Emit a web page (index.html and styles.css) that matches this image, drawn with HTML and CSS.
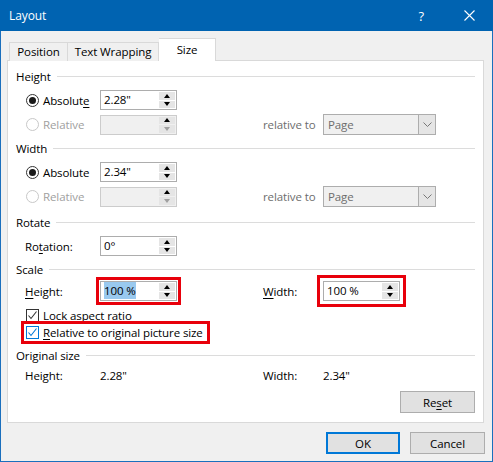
FILE: index.html
```html
<!DOCTYPE html>
<html lang="en">
<head>
  <meta charset="UTF-8">
  <title>Layout</title>
  <link rel="stylesheet" href="styles.css">
</head>
<body>
  <div class="dialog">
    <div class="titlebar">
      <span class="title">Layout</span>
      <span class="help">?</span>
      <span class="close">
        <svg width="11" height="11" viewBox="0 0 11 11"><path d="M0.5 0.5L10.5 10.5M10.5 0.5L0.5 10.5" stroke="#fff" stroke-width="1.1" fill="none"/></svg>
      </span>
    </div>

    <div class="tabs">
      <div class="tab tab-position">Position</div>
      <div class="tab tab-wrap">Text Wrapping</div>
      <div class="tab tab-size active">Size</div>
    </div>

    <div class="panel">
      <!-- Height -->
      <div class="group-title first"><span>Height</span></div>
      <div class="row">
        <label class="opt"><span class="radio on"></span><span>Absolut<u>e</u></span></label>
        <div class="spin"><span class="val">2.28"</span><span class="arrows"><i class="up"></i><i class="down"></i></span></div>
      </div>
      <div class="row tall">
        <label class="opt off"><span class="radio"></span><span>Relative</span></label>
        <div class="spin disabled"><span class="val"></span><span class="arrows"><i class="up"></i><i class="down"></i></span></div>
        <span class="rel-label">relative to</span>
        <div class="combo"><span class="combo-text">Page</span><span class="combo-btn"><svg width="9" height="5" viewBox="0 0 9 5"><path d="M0.5 0.5L4.5 4.5L8.5 0.5" stroke="#777" fill="none"/></svg></span></div>
      </div>

      <!-- Width -->
      <div class="group-title"><span>Width</span></div>
      <div class="row">
        <label class="opt"><span class="radio on"></span><span>Absolute</span></label>
        <div class="spin"><span class="val">2.34"</span><span class="arrows"><i class="up"></i><i class="down"></i></span></div>
      </div>
      <div class="row tall">
        <label class="opt off"><span class="radio"></span><span>Relative</span></label>
        <div class="spin disabled"><span class="val"></span><span class="arrows"><i class="up"></i><i class="down"></i></span></div>
        <span class="rel-label">relative to</span>
        <div class="combo"><span class="combo-text">Page</span><span class="combo-btn"><svg width="9" height="5" viewBox="0 0 9 5"><path d="M0.5 0.5L4.5 4.5L8.5 0.5" stroke="#777" fill="none"/></svg></span></div>
      </div>

      <!-- Rotate -->
      <div class="group-title rotate"><span>Rotate</span></div>
      <div class="row">
        <span class="label">Ro<u>t</u>ation:</span>
        <div class="spin"><span class="val">0°</span><span class="arrows"><i class="up"></i><i class="down"></i></span></div>
      </div>

      <!-- Scale -->
      <div class="group-title"><span>Scale</span></div>
      <div class="row scale-row">
        <span class="label"><span><u>H</u>eight:</span></span>
        <div class="spin marked-left"><span class="val"><span class="selected">100 %</span></span><span class="arrows"><i class="up"></i><i class="down"></i></span></div>
        <span class="rel-label dark"><u>W</u>idth:</span>
        <div class="spin marked-right"><span class="val">100 %</span><span class="arrows"><i class="up"></i><i class="down"></i></span></div>
      </div>
      <div class="row check-row">
        <label class="opt"><span class="check"><svg width="11" height="11" viewBox="0 0 11 11"><path d="M1.5 5.5L4 8.5L9.5 1.5" stroke="#333" stroke-width="1.1" fill="none"/></svg></span><span>Lock <u>a</u>spect ratio</span></label>
      </div>
      <div class="row check-row marked-row">
        <label class="opt marked-check"><span class="check blue"><svg width="11" height="11" viewBox="0 0 11 11"><path d="M1.5 5.5L4 8.5L9.5 1.5" stroke="#0078d7" stroke-width="1.1" fill="none"/></svg></span><span><u>R</u>elative to original picture size</span></label>
      </div>

      <!-- Original size -->
      <div class="group-title original"><span>Original size</span></div>
      <div class="row info-row">
        <span class="label">Height:</span>
        <span class="info-val">2.28"</span>
        <span class="rel-label dark">Width:</span>
        <span class="info-val">2.34"</span>
      </div>
      <div class="reset-row">
        <button class="btn">Re<u>s</u>et</button>
      </div>
    </div>

    <div class="footer">
      <button class="btn btn-ok">OK</button>
      <button class="btn btn-cancel">Cancel</button>
    </div>
  </div>
</body>
</html>
```

FILE: styles.css
```css
/* Dialog frame */
body {
  margin: 0;
  background-color: #f0f0f0;
  font-family: "Open Sans", "Noto Sans", sans-serif;
  font-size: 11.5px;
  letter-spacing: -0.1px;
  color: #000;
}

.dialog {
  width: 493px;
  height: 462px;
  box-sizing: border-box;
  border: 1px solid #1a6fbd;
  border-top: none;
  background-color: #f0f0f0;
  display: flex;
  flex-direction: column;
}

u {
  text-decoration-thickness: 1px;
  text-underline-offset: 2px;
}

/* Title bar */
.titlebar {
  height: 31px;
  margin: 0 -1px;
  background-color: #0063b1;
  color: #fff;
  display: flex;
  align-items: center;
  padding: 0 18px 0 9px;
}

.title {
  font-size: 12px;
  flex: 1;
  padding-bottom: 1px;
}

.help {
  font-size: 13px;
  margin-right: 40px;
}

.close {
  display: flex;
}

/* Tabs */
.tabs {
  display: flex;
  align-items: flex-end;
  margin: 7px 0 -1px 8px;
  position: relative;
  z-index: 1;
}

.tab {
  height: 18px;
  line-height: 18px;
  text-align: center;
  border: 1px solid #d9d9d9;
  border-bottom: none;
  background-color: #f0f0f0;
  box-sizing: content-box;
}

.tab-position {
  width: 57px;
}

.tab-wrap {
  width: 90px;
  border-left: none;
}

.tab-size {
  width: 56px;
}

.tab.active {
  height: 22px;
  line-height: 22px;
  background-color: #fff;
  border-left: none;
}

/* Content panel */
.panel {
  margin: 0 8px 0 6px;
  height: 363px;
  box-sizing: border-box;
  border: 1px solid #d9d9d9;
  background-color: #fff;
  padding: 0 8px;
}

.group-title {
  display: flex;
  align-items: center;
  height: 16px;
  margin-top: 5px;
}

.group-title.first {
  margin-top: 7px;
}

.group-title.rotate {
  margin-top: 7px;
}

.group-title.original {
  margin-top: 6px;
}

.group-title span {
  padding-right: 6px;
}

.group-title::after {
  content: "";
  flex: 1;
  border-top: 1px solid #dcdcdc;
}

.row {
  display: flex;
  align-items: center;
  height: 20px;
  margin-top: 6px;
  padding-left: 9px;
}

.row.tall {
  height: 21px;
  margin-top: 4px;
}

.scale-row {
  margin-top: 4px;
}

.check-row {
  height: 16px;
}

.check-row.marked-row {
  height: 17px;
  margin-top: 1px;
}

.info-row {
  height: 16px;
  margin-top: 4px;
}

.opt,
.label {
  width: 75px;
  display: flex;
  align-items: center;
  white-space: nowrap;
}

.opt.off {
  color: #a0a0a0;
}

.radio {
  width: 13px;
  height: 13px;
  box-sizing: border-box;
  border: 1px solid #333;
  border-radius: 50%;
  margin: 0 4px 0 1px;
  position: relative;
  background-color: #fff;
}

.radio.on::after {
  content: "";
  position: absolute;
  left: 2px;
  top: 2px;
  width: 7px;
  height: 7px;
  border-radius: 50%;
  background-color: #1a1a1a;
}

.opt.off .radio {
  border-color: #c8c8c8;
}

.check {
  width: 13px;
  height: 13px;
  box-sizing: border-box;
  border: 1px solid #333;
  margin: 0 4px 0 1px;
  display: flex;
  align-items: center;
  justify-content: center;
  flex-shrink: 0;
}

.check.blue {
  border-color: #0078d7;
}

.marked-check {
  width: 183px;
  height: 17px;
  box-sizing: border-box;
  outline: 3px solid #e8000b;
  outline-offset: 0;
  padding-left: 1px;
  margin-left: -1px;
}

/* Spin boxes */
.spin {
  width: 77px;
  height: 20px;
  box-sizing: border-box;
  border: 1px solid #adadad;
  background-color: #fff;
  display: flex;
}

.spin.disabled {
  border-color: #cccccc;
  background-color: #f0f0f0;
}

.spin .val {
  flex: 1;
  line-height: 18px;
  padding-left: 3px;
}

.selected {
  background-color: #99c9ef;
  padding: 1px 0;
}

.arrows {
  width: 16px;
  display: flex;
  flex-direction: column;
  gap: 1px;
  padding: 1px 1px 1px 0;
}

.arrows i {
  flex: 1;
  background-color: #e5e5e5;
  display: flex;
  align-items: center;
  justify-content: center;
}

.arrows i::after {
  content: "";
  border-left: 3px solid transparent;
  border-right: 3px solid transparent;
}

.arrows .up::after {
  border-bottom: 4px solid #000;
}

.arrows .down::after {
  border-top: 4px solid #000;
}

.spin.disabled .arrows .down::after {
  border-top-color: #a0a0a0;
}

.marked-left {
  outline: 3px solid #e8000b;
  outline-offset: 1px;
}

.marked-right {
  outline: 3px solid #e8000b;
  outline-offset: 3px;
}

.rel-label {
  margin-left: 86px;
  width: 60px;
  color: #6d6d6d;
}

.rel-label.dark {
  color: #000;
}

.info-val {
  width: 77px;
}

/* Combo box */
.combo {
  width: 113px;
  height: 21px;
  box-sizing: border-box;
  border: 1px solid #adadad;
  background-color: #f0f0f0;
  display: flex;
  color: #6d6d6d;
}

.combo-text {
  flex: 1;
  line-height: 19px;
  padding-left: 4px;
}

.combo-btn {
  width: 16px;
  border-left: 1px solid #adadad;
  background-color: #e5e5e5;
  display: flex;
  align-items: center;
  justify-content: center;
}

/* Buttons */
.reset-row {
  display: flex;
  justify-content: flex-end;
  margin-top: 8px;
}

.btn {
  font-family: inherit;
  font-size: inherit;
  letter-spacing: inherit;
  color: #000;
  width: 75px;
  height: 22px;
  box-sizing: border-box;
  border: 1px solid #adadad;
  background-color: #e1e1e1;
  padding: 0;
}

.footer {
  display: flex;
  justify-content: flex-end;
  gap: 10px;
  padding: 9px 7px 0 0;
}

.btn-ok {
  width: 74px;
  border: 2px solid #0078d7;
}
```
